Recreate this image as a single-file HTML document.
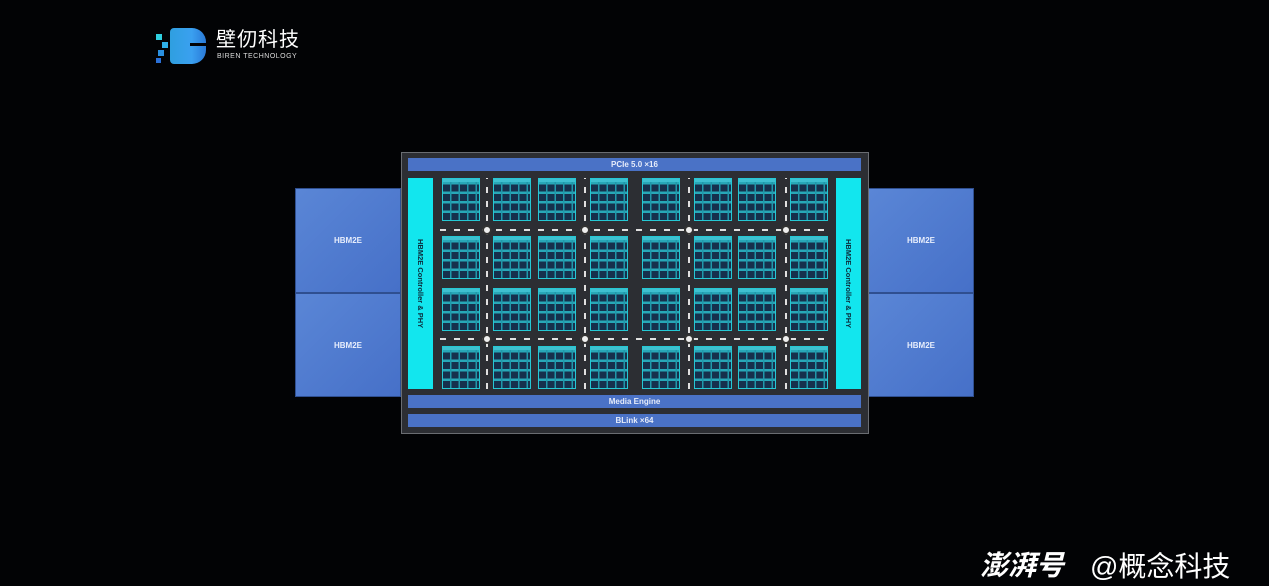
<!DOCTYPE html>
<html><head><meta charset="utf-8"><style>
*{margin:0;padding:0;box-sizing:border-box}
body{width:1269px;height:586px;background:#020305;position:relative;overflow:hidden;font-family:"Liberation Sans","Noto Sans CJK SC",sans-serif}
.a{position:absolute}
.hbm{background:linear-gradient(135deg,#5a86d6,#4670c8);color:#e8eefc;font-size:8px;font-weight:bold;display:flex;align-items:center;justify-content:center;border:1px solid #2f4f90}
.bar{background:#4a72c6;color:#e6ecfa;font-size:8px;font-weight:bold;display:flex;align-items:center;justify-content:center}
.cy{background:#12e6ee;display:flex;align-items:center;justify-content:center}
.cy span{writing-mode:vertical-rl;font-size:7.5px;font-weight:bold;color:#0b2a3a;white-space:nowrap}
.t{border:1.5px solid #25c8d4;background:
repeating-linear-gradient(90deg,transparent 0 7px,#2098aa 7px 8.5px),
repeating-linear-gradient(0deg,#16304c 0 7px,#28a8b8 7px 9.5px);}
.t:before{content:"";position:absolute;left:0;right:0;top:0;height:3px;background:#3fc0d0}
.dh{height:2px;background:repeating-linear-gradient(90deg,#e0e0e0 0 6px,transparent 6px 14px)}
.dv{width:2px;background:repeating-linear-gradient(0deg,#e0e0e0 0 6px,transparent 6px 14px)}
.n{width:10px;height:10px;border-radius:50%;background:#eee;border:2px solid #333}
</style></head><body>
<div class="a" style="left:156px;top:28px;width:50px;height:36px">
<div class="a" style="left:14px;top:0;width:36px;height:36px;border-radius:4px 14px 14px 4px;background:linear-gradient(90deg,#2f9fe0,#3aa0f0 60%,#2a7ad8)"></div>
<div class="a" style="left:34px;top:15px;width:16px;height:3px;background:#020305"></div>
<div class="a" style="left:0;top:6px;width:6px;height:6px;background:#2fd0e0"></div>
<div class="a" style="left:6px;top:14px;width:6px;height:6px;background:#2fb0e8"></div>
<div class="a" style="left:2px;top:22px;width:6px;height:6px;background:#2a90e0"></div>
<div class="a" style="left:0;top:30px;width:5px;height:5px;background:#2a70d8"></div>
</div>
<div class="a" style="left:216px;top:29px;color:#fff;font-size:20px;letter-spacing:1px;line-height:22px">壁仞科技</div>
<div class="a" style="left:217px;top:53px;color:#ddd;font-size:7px;letter-spacing:.5px">BIREN TECHNOLOGY</div>

<div class="a hbm" style="left:295px;top:188px;width:106px;height:105px">HBM2E</div>
<div class="a hbm" style="left:295px;top:293px;width:106px;height:104px">HBM2E</div>
<div class="a hbm" style="left:868px;top:188px;width:106px;height:105px">HBM2E</div>
<div class="a hbm" style="left:868px;top:293px;width:106px;height:104px">HBM2E</div>

<div class="a" style="left:401px;top:152px;width:468px;height:282px;background:#2c2e33;border:1px solid #6a6d72"></div>
<div class="a bar" style="left:408px;top:158px;width:453px;height:13px">PCIe 5.0 ×16</div>
<div class="a cy" style="left:408px;top:178px;width:25px;height:211px"><span>HBM2E Controller &amp; PHY</span></div>
<div class="a cy" style="left:836px;top:178px;width:25px;height:211px"><span>HBM2E Controller &amp; PHY</span></div>
<div class="a bar" style="left:408px;top:395px;width:453px;height:13px">Media Engine</div>
<div class="a bar" style="left:408px;top:414px;width:453px;height:13px">BLink ×64</div>
<div id="g"></div>
<script>
var xs=[442,493,538,590,642,694,738,790],ys=[178,236,288,346],h='';
xs.forEach(function(x){ys.forEach(function(y){h+='<div class="a t" style="left:'+x+'px;top:'+y+'px;width:38px;height:43px"></div>';});});
[229,338].forEach(function(y){h+='<div class="a dh" style="left:440px;top:'+y+'px;width:392px"></div>';});
[486,584,688,785].forEach(function(x){h+='<div class="a dv" style="left:'+x+'px;top:178px;height:211px"></div>';
[229,338].forEach(function(y){h+='<div class="a n" style="left:'+(x-4)+'px;top:'+(y-4)+'px"></div>';});});
document.getElementById('g').innerHTML=h;
</script>
<div class="a" style="left:980px;top:544px;color:#fff;font-size:28px;font-weight:bold;font-style:italic">澎湃号</div>
<div class="a" style="left:1090px;top:545px;color:#fff;font-size:28px">@概念科技</div>
</body></html>
